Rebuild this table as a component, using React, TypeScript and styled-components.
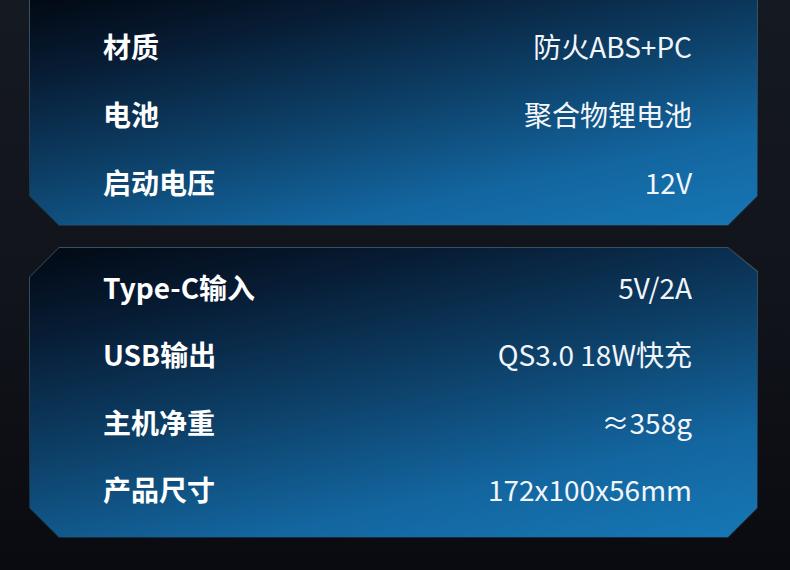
import React from "react";
import styled, { createGlobalStyle } from "styled-components";

const GlobalStyle = createGlobalStyle`
  html, body {
    margin: 0;
    padding: 0;
    width: 790px;
    height: 570px;
    overflow: hidden;
    background: linear-gradient(180deg, #151922 0%, #11141b 50%, #0a0b10 100%);
    font-family: "Noto Sans CJK SC", "Noto Sans", sans-serif;
  }
`;

const Page = styled.div`
  width: 790px;
  height: 570px;
  display: flex;
  flex-direction: column;
  gap: 21px;
  padding: 0 32px 0 29px;
  box-sizing: border-box;
`;

const C = 30;

const Frame = styled.div<{ $topCut: boolean }>`
  padding: ${({ $topCut }) => ($topCut ? "1px" : "0 1px 1px 1px")};
  background: linear-gradient(180deg, rgba(80, 120, 150, 0.6), rgba(60, 110, 150, 0.3));
  clip-path: ${({ $topCut }) =>
    $topCut
      ? `polygon(${C}px 0, calc(100% - ${C}px) 0, 100% ${C - 6}px, 100% calc(100% - ${C}px), calc(100% - ${C}px) 100%, ${C}px 100%, 0 calc(100% - ${C}px), 0 ${C}px)`
      : `polygon(0 0, 100% 0, 100% calc(100% - ${C}px), calc(100% - ${C}px) 100%, ${C}px 100%, 0 calc(100% - ${C}px))`};
`;

const Panel = styled.div<{ $topCut: boolean; $padTop: number; $padBottom: number }>`
  display: flex;
  flex-direction: column;
  padding: ${({ $padTop, $padBottom }) => `${$padTop}px 65px ${$padBottom}px 73px`};
  background: linear-gradient(168deg, #020913 0%, #071c34 20%, #0d4068 48%, #1366a0 76%, #1677b4 100%);
  clip-path: ${({ $topCut }) =>
    $topCut
      ? `polygon(${C - 1}px 0, calc(100% - ${C - 1}px) 0, 100% ${C - 6}px, 100% calc(100% - ${C - 1}px), calc(100% - ${C - 1}px) 100%, ${C - 1}px 100%, 0 calc(100% - ${C - 1}px), 0 ${C - 1}px)`
      : `polygon(0 0, 100% 0, 100% calc(100% - ${C - 1}px), calc(100% - ${C - 1}px) 100%, ${C - 1}px 100%, 0 calc(100% - ${C - 1}px))`};
`;

const Row = styled.div<{ $h: number }>`
  height: ${({ $h }) => $h}px;
  display: flex;
  align-items: center;
  justify-content: space-between;
  color: #ffffff;
`;

const Label = styled.span`
  font-size: 28px;
  font-weight: 700;
  line-height: 1;
`;

const Value = styled.span`
  font-size: 28px;
  font-weight: 400;
  line-height: 1;
  color: #f2f6fa;
`;

type Spec = [string, string];

const group1: Spec[] = [
  ["材质", "防火ABS+PC"],
  ["电池", "聚合物锂电池"],
  ["启动电压", "12V"],
];

const group2: Spec[] = [
  ["Type-C输入", "5V/2A"],
  ["USB输出", "QS3.0 18W快充"],
  ["主机净重", "≈358g"],
  ["产品尺寸", "172x100x56mm"],
];

const SpecPanel: React.FC<{ items: Spec[]; topCut: boolean; padTop: number; padBottom: number; rowH: number }> = ({
  items,
  topCut,
  padTop,
  padBottom,
  rowH,
}) => (
  <Frame $topCut={topCut}>
    <Panel $topCut={topCut} $padTop={padTop} $padBottom={padBottom}>
      {items.map(([k, v]) => (
        <Row key={k} $h={rowH}>
          <Label>{k}</Label>
          <Value>{v}</Value>
        </Row>
      ))}
    </Panel>
  </Frame>
);

export default function App() {
  return (
    <>
      <GlobalStyle />
      <Page>
        <SpecPanel items={group1} topCut={false} padTop={12} padBottom={9} rowH={68} />
        <SpecPanel items={group2} topCut={true} padTop={5} padBottom={14} rowH={67.5} />
      </Page>
    </>
  );
}
